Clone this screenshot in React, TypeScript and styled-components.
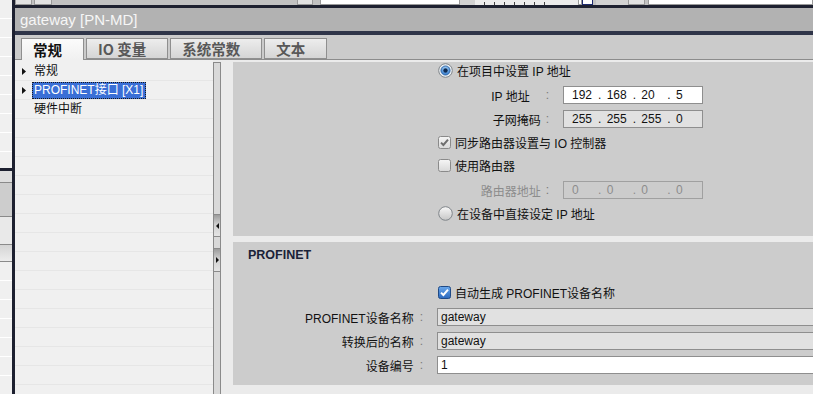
import React from 'react';
import styled, { createGlobalStyle } from 'styled-components';

const GlobalStyle = createGlobalStyle`
  html, body {
    margin: 0;
    padding: 0;
  }
  body {
    width: 813px;
    height: 394px;
    overflow: hidden;
    background: #ebebeb;
    color: #111;
    font-family: "Liberation Sans", "Noto Sans CJK SC", sans-serif;
    font-size: 12px;
  }
`;

const Screen = styled.div`
  display: flex;
  width: 813px;
  height: 394px;
  overflow: hidden;
`;

/* neighbouring panel cut off on the left */
const SideStrip = styled.div`
  width: 12px;
  flex-shrink: 0;
  display: flex;
  flex-direction: column;
  background: #f0f0f0;
`;

const StripBlock = styled.div<{ $h?: number; $bg?: string; $lined?: boolean; $edged?: boolean }>`
  height: ${(p) => (p.$h ? `${p.$h}px` : 'auto')};
  flex: ${(p) => (p.$h ? '0 0 auto' : '1')};
  box-sizing: border-box;
  background: ${(p) =>
    p.$lined
      ? 'repeating-linear-gradient(to bottom, #f0f0f0 0 18px, #ffffff 18px 19px)'
      : p.$bg || '#f0f0f0'};
  border-top: ${(p) => (p.$edged ? '1px solid #8a8a8a' : 'none')};
  border-bottom: ${(p) => (p.$edged ? '1px solid #8a8a8a' : 'none')};
`;

const Divider = styled.div`
  width: 3px;
  flex-shrink: 0;
  background: #1d2030;
`;

const Main = styled.div`
  flex: 1;
  min-width: 0;
  display: flex;
  flex-direction: column;
`;

const Toolbar = styled.div`
  height: 5px;
  display: flex;
  background: #c2c2c2;
  overflow: hidden;
`;

const TbPiece = styled.div<{ $w?: number; $kind?: 'btn' | 'field' | 'ruler' | 'mark' | 'gray' | 'light' }>`
  width: ${(p) => (p.$w ? `${p.$w}px` : 'auto')};
  flex: ${(p) => (p.$w ? '0 0 auto' : '1')};
  box-sizing: border-box;
  background: ${(p) =>
    p.$kind === 'btn'
      ? '#e2e2e2'
      : p.$kind === 'field'
      ? '#ffffff'
      : p.$kind === 'ruler'
      ? 'repeating-linear-gradient(to right, transparent 0 9px, #444 9px 10px) 0 2px / 70px 3px no-repeat, #ececec'
      : p.$kind === 'mark'
      ? '#ffffff'
      : p.$kind === 'light'
      ? '#d2d2d2'
      : 'transparent'};
  border: ${(p) =>
    p.$kind === 'btn' || p.$kind === 'field'
      ? '1px solid #9a9a9a'
      : p.$kind === 'mark'
      ? '1px solid #1d2a6e'
      : 'none'};
  border-top: none;
`;

const DarkRule = styled.div<{ $h: number; $c: string }>`
  height: ${(p) => p.$h}px;
  background: ${(p) => p.$c};
`;

const TitleBar = styled.div`
  height: 23px;
  display: flex;
  align-items: center;
  padding-left: 5px;
  background: #b2b2b2;
  color: #f6f6f6;
  font-size: 15px;
`;

const TabStrip = styled.div`
  height: 25px;
  box-sizing: border-box;
  display: flex;
  align-items: flex-end;
  gap: 2px;
  padding-left: 6px;
  background: #cbcbcb;
  border-bottom: 1px solid #8c8c8c;
`;

const Tab = styled.div<{ $active?: boolean }>`
  height: ${(p) => (p.$active ? '22px' : '21px')};
  margin-bottom: ${(p) => (p.$active ? '-1px' : '0')};
  box-sizing: border-box;
  display: flex;
  align-items: center;
  padding: 0 21px 0 11px;
  border: 1px solid #8f8f8f;
  border-bottom: ${(p) => (p.$active ? 'none' : '1px solid #8f8f8f')};
  background: ${(p) =>
    p.$active ? 'linear-gradient(#fbfbfb, #f0f0f0)' : 'linear-gradient(#ededed, #d5d5d5)'};
  color: ${(p) => (p.$active ? '#111' : '#585858')};
  font-family: "Noto Sans CJK SC", sans-serif;
  font-size: 14.5px;
  font-weight: 700;
`;

const Body = styled.div`
  flex: 1;
  min-height: 0;
  display: flex;
  background: #ebebeb;
`;

const Tree = styled.div`
  width: 198px;
  flex-shrink: 0;
  padding-top: 2px;
  background: #f0f0f0;
  overflow: hidden;
`;

const TreeRow = styled.div`
  height: 19px;
  box-sizing: border-box;
  display: flex;
  align-items: center;
  padding-left: 7px;
  border-bottom: 1px solid #e6e6e6;
`;

const ArrowSlot = styled.span`
  width: 4px;
  margin-right: 6px;
  display: flex;
  align-items: center;
`;

const TreeLabel = styled.span<{ $selected?: boolean }>`
  padding: 0 2px 0 1px;
  line-height: 15px;
  border: 1px dotted ${(p) => (p.$selected ? '#1a1a1a' : 'transparent')};
  background: ${(p) => (p.$selected ? '#3a6fd6' : 'transparent')};
  color: ${(p) => (p.$selected ? '#ffffff' : '#111')};
  white-space: nowrap;
`;

const Splitter = styled.div`
  width: 8px;
  flex-shrink: 0;
  box-sizing: border-box;
  margin-top: 2px;
  display: flex;
  flex-direction: column;
  background: #d9d9d9;
  border: 1px solid #8a8a8a;
  border-bottom: none;
`;

const SplitButton = styled.div<{ $top: number; $h: number }>`
  margin-top: ${(p) => p.$top}px;
  height: ${(p) => p.$h}px;
  box-sizing: border-box;
  display: flex;
  align-items: center;
  justify-content: center;
  background: linear-gradient(#9c9c9c, #d0d0d0 45%, #e4e4e4);
  border-top: 1px solid #8a8a8a;
  border-bottom: 1px solid #8a8a8a;
`;

const Content = styled.div`
  flex: 1;
  min-width: 0;
  margin-left: 12px;
  padding-top: 2px;
  display: flex;
  flex-direction: column;
  gap: 6px;
`;

const Section = styled.div<{ $pb: number }>`
  display: flex;
  flex-direction: column;
  padding-bottom: ${(p) => p.$pb}px;
  background: #cccccc;
`;

const SectionTitle = styled.div`
  padding: 5px 0 0 15px;
  line-height: 16px;
  color: #1a2238;
  font-size: 12.5px;
  font-weight: 700;
`;

const OptionRow = styled.label<{ $mt?: number; $h?: number }>`
  height: ${(p) => p.$h || 18}px;
  margin-top: ${(p) => p.$mt || 0}px;
  display: flex;
  align-items: center;
  gap: 4px;
  padding-left: 205px;
  white-space: nowrap;
`;

const FieldRow = styled.div<{ $labelW: number; $mt: number }>`
  height: 18px;
  margin-top: ${(p) => p.$mt}px;
  display: grid;
  grid-template-columns: ${(p) => p.$labelW}px auto;
  align-items: center;
`;

const FieldLabel = styled.div<{ $muted?: boolean }>`
  display: flex;
  justify-content: flex-end;
  align-items: center;
  color: ${(p) => (p.$muted ? '#8c8c8c' : '#111')};
  white-space: nowrap;
`;

const Colon = styled.span<{ $lead?: number }>`
  margin: 0 14px 0 ${(p) => p.$lead ?? 5}px;
  color: #7a7a7a;
`;

const Field = styled.div<{ $w: number; $tone: 'white' | 'gray' | 'off'; $pl: number }>`
  width: ${(p) => p.$w}px;
  height: 18px;
  box-sizing: border-box;
  display: flex;
  align-items: center;
  padding-left: ${(p) => p.$pl}px;
  border: 1px solid ${(p) => (p.$tone === 'off' ? '#a0a0a0' : '#8e8e8e')};
  background: ${(p) => (p.$tone === 'white' ? '#ffffff' : p.$tone === 'gray' ? '#e1e1e1' : '#cccccc')};
  color: ${(p) => (p.$tone === 'off' ? '#8c8c8c' : '#111')};
  white-space: nowrap;
`;

const Octet = styled.span`
  display: inline-block;
  width: 27px;
`;

const Dot = styled.span`
  display: inline-block;
  width: 9px;
`;

const TreeArrow = () => (
  <svg width="4" height="7" viewBox="0 0 4 7">
    <path d="M0 0 L4 3.5 L0 7 Z" fill="#111" />
  </svg>
);

const SplitArrow = ({ dir }: { dir: 'left' | 'right' }) => (
  <svg width="3" height="6" viewBox="0 0 3 6">
    <path d={dir === 'left' ? 'M3 0 L0 3 L3 6 Z' : 'M0 0 L3 3 L0 6 Z'} fill="#111" />
  </svg>
);

const Radio = ({ checked }: { checked?: boolean }) => (
  <svg width="15" height="15" viewBox="0 0 15 15">
    <defs>
      <linearGradient id="radio-off" x1="0" y1="0" x2="0" y2="1">
        <stop offset="0" stopColor="#f8f8f8" />
        <stop offset="1" stopColor="#c6c6c6" />
      </linearGradient>
      <radialGradient id="radio-on" cx="0.5" cy="0.35" r="0.6">
        <stop offset="0" stopColor="#b8ddfa" />
        <stop offset="1" stopColor="#2f78cc" />
      </radialGradient>
    </defs>
    <circle cx="7.5" cy="7.5" r="6.8" fill={checked ? '#eef2f6' : 'url(#radio-off)'} stroke="#7f8489" />
    {checked && (
      <>
        <circle cx="7.5" cy="7.5" r="4.6" fill="url(#radio-on)" stroke="#2a5f9e" strokeWidth="0.8" />
        <circle cx="7.5" cy="7.5" r="2.2" fill="#0d2a52" />
      </>
    )}
  </svg>
);

const Check = ({ state }: { state: 'on' | 'off' | 'blue' }) => (
  <svg width="13" height="13" viewBox="0 0 13 13">
    <defs>
      <linearGradient id="check-gray" x1="0" y1="0" x2="0" y2="1">
        <stop offset="0" stopColor="#f6f6f6" />
        <stop offset="1" stopColor="#d8d8d8" />
      </linearGradient>
      <linearGradient id="check-blue" x1="0" y1="0" x2="0" y2="1">
        <stop offset="0" stopColor="#6aa8ec" />
        <stop offset="1" stopColor="#2b68bd" />
      </linearGradient>
    </defs>
    <rect
      x="0.5"
      y="0.5"
      width="12"
      height="12"
      rx="2"
      fill={state === 'blue' ? 'url(#check-blue)' : 'url(#check-gray)'}
      stroke={state === 'blue' ? '#1f4a86' : '#8a8a8a'}
    />
    {state !== 'off' && (
      <path
        d="M3 6.6 L5.4 9 L10 3.6"
        fill="none"
        stroke={state === 'blue' ? '#ffffff' : '#6e6e6e'}
        strokeWidth="2"
      />
    )}
  </svg>
);

const IpValue = ({ parts }: { parts: string[] }) => (
  <>
    {parts.map((part, i) => (
      <React.Fragment key={i}>
        <Octet>{part}</Octet>
        {i < parts.length - 1 && <Dot>.</Dot>}
      </React.Fragment>
    ))}
  </>
);

const TABS = ['常规', 'IO 变量', '系统常数', '文本'];

const TREE = [
  { id: 1, label: '常规', arrow: true },
  { id: 2, label: 'PROFINET接口 [X1]', arrow: true, selected: true },
  { id: 3, label: '硬件中断', arrow: false },
];

const App = () => {
  const emptyRows = Array.from({ length: 16 }, (_, i) => i);

  return (
    <Screen>
      <GlobalStyle />
      <SideStrip>
        <StripBlock $h={168} $lined />
        <StripBlock $h={3} $bg="#1d2030" />
        <StripBlock $h={11} $bg="#dedede" />
        <StripBlock $h={35} $bg="#cdcdcd" $edged />
        <StripBlock $h={27} $bg="#e9e9e9" />
        <StripBlock $h={18} $bg="linear-gradient(#d4d4d4, #ececec)" $edged />
        <StripBlock $lined />
      </SideStrip>
      <Divider />
      <Main>
        <Toolbar>
          <TbPiece $w={17} $kind="btn" />
          <TbPiece $w={2} $kind="gray" />
          <TbPiece $w={18} $kind="btn" />
          <TbPiece $w={245} $kind="gray" />
          <TbPiece $w={16} $kind="btn" />
          <TbPiece $w={7} $kind="gray" />
          <TbPiece $w={140} $kind="field" />
          <TbPiece $w={15} $kind="light" />
          <TbPiece $w={103} $kind="ruler" />
          <TbPiece $w={4} $kind="field" />
          <TbPiece $w={11} $kind="mark" />
          <TbPiece $w={3} $kind="gray" />
          <TbPiece $w={32} $kind="light" />
          <TbPiece $w={17} $kind="btn" />
          <TbPiece $w={3} $kind="gray" />
          <TbPiece $kind="field" />
        </Toolbar>
        <DarkRule $h={3} $c="#1e2130" />
        <TitleBar>gateway [PN-MD]</TitleBar>
        <DarkRule $h={4} $c="#2f3549" />
        <TabStrip>
          {TABS.map((tab, i) => (
            <Tab key={tab} $active={i === 0}>
              {tab}
            </Tab>
          ))}
        </TabStrip>
        <Body>
          <Tree>
            {TREE.map((item) => (
              <TreeRow key={item.id}>
                <ArrowSlot>{item.arrow && <TreeArrow />}</ArrowSlot>
                <TreeLabel $selected={item.selected}>{item.label}</TreeLabel>
              </TreeRow>
            ))}
            {emptyRows.map((i) => (
              <TreeRow key={`empty-${i}`} />
            ))}
          </Tree>
          <Splitter>
            <SplitButton $top={151} $h={23}>
              <SplitArrow dir="left" />
            </SplitButton>
            <SplitButton $top={11} $h={24}>
              <SplitArrow dir="right" />
            </SplitButton>
          </Splitter>
          <Content>
            <Section $pb={14}>
              <OptionRow $h={17}>
                <Radio checked />
                <span>在项目中设置 IP 地址</span>
              </OptionRow>
              <FieldRow $labelW={330} $mt={7}>
                <FieldLabel>
                  IP 地址
                  <Colon $lead={16}>:</Colon>
                </FieldLabel>
                <Field $w={140} $tone="white" $pl={8}>
                  <IpValue parts={['192', '168', '20', '5']} />
                </Field>
              </FieldRow>
              <FieldRow $labelW={330} $mt={6}>
                <FieldLabel>
                  子网掩码
                  <Colon>:</Colon>
                </FieldLabel>
                <Field $w={140} $tone="gray" $pl={8}>
                  <IpValue parts={['255', '255', '255', '0']} />
                </Field>
              </FieldRow>
              <OptionRow $mt={5}>
                <Check state="on" />
                <span>同步路由器设置与 IO 控制器</span>
              </OptionRow>
              <OptionRow $mt={5}>
                <Check state="off" />
                <span>使用路由器</span>
              </OptionRow>
              <FieldRow $labelW={330} $mt={7}>
                <FieldLabel $muted>
                  路由器地址
                  <Colon>:</Colon>
                </FieldLabel>
                <Field $w={140} $tone="off" $pl={8}>
                  <IpValue parts={['0', '0', '0', '0']} />
                </Field>
              </FieldRow>
              <OptionRow $mt={5}>
                <Radio />
                <span>在设备中直接设定 IP 地址</span>
              </OptionRow>
            </Section>
            <Section $pb={11}>
              <SectionTitle>PROFINET</SectionTitle>
              <OptionRow $mt={20}>
                <Check state="blue" />
                <span>自动生成 PROFINET设备名称</span>
              </OptionRow>
              <FieldRow $labelW={204} $mt={7}>
                <FieldLabel>
                  PROFINET设备名称
                  <Colon $lead={6}>:</Colon>
                </FieldLabel>
                <Field $w={420} $tone="gray" $pl={3}>
                  gateway
                </Field>
              </FieldRow>
              <FieldRow $labelW={204} $mt={6}>
                <FieldLabel>
                  转换后的名称
                  <Colon $lead={6}>:</Colon>
                </FieldLabel>
                <Field $w={420} $tone="gray" $pl={3}>
                  gateway
                </Field>
              </FieldRow>
              <FieldRow $labelW={204} $mt={6}>
                <FieldLabel>
                  设备编号
                  <Colon $lead={6}>:</Colon>
                </FieldLabel>
                <Field $w={420} $tone="white" $pl={3}>
                  1
                </Field>
              </FieldRow>
            </Section>
          </Content>
        </Body>
      </Main>
    </Screen>
  );
};

export default App;
